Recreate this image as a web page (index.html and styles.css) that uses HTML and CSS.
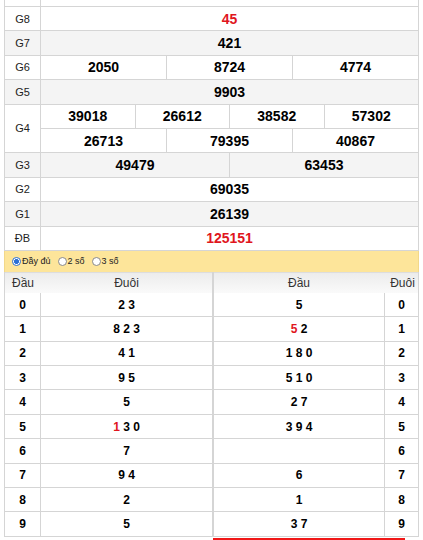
FILE: index.html
```html
<!DOCTYPE html>
<html lang="vi">
<head>
<meta charset="utf-8">
<link rel="stylesheet" href="styles.css">
</head>
<body>
<div class="wrap">
  <div class="kq">
    <div class="row top"><div class="lbl"></div><div class="vals"></div></div>
    <div class="row"><div class="lbl">G8</div><div class="vals"><span class="c red">45</span></div></div>
    <div class="row alt"><div class="lbl">G7</div><div class="vals"><span class="c">421</span></div></div>
    <div class="row"><div class="lbl">G6</div><div class="vals"><span class="c">2050</span><span class="c">8724</span><span class="c">4774</span></div></div>
    <div class="row alt"><div class="lbl">G5</div><div class="vals"><span class="c">9903</span></div></div>
    <div class="row dbl"><div class="lbl">G4</div>
      <div class="stack">
        <div class="vals sub"><span class="c">39018</span><span class="c">26612</span><span class="c">38582</span><span class="c">57302</span></div>
        <div class="vals"><span class="c">26713</span><span class="c">79395</span><span class="c">40867</span></div>
      </div>
    </div>
    <div class="row alt"><div class="lbl">G3</div><div class="vals"><span class="c">49479</span><span class="c">63453</span></div></div>
    <div class="row"><div class="lbl">G2</div><div class="vals"><span class="c">69035</span></div></div>
    <div class="row alt"><div class="lbl">G1</div><div class="vals"><span class="c">26139</span></div></div>
    <div class="row"><div class="lbl">ĐB</div><div class="vals"><span class="c red">125151</span></div></div>
  </div>

  <div class="opts">
    <label class="opt"><span class="radio on"></span>Đầy đủ</label>
    <label class="opt"><span class="radio"></span>2 số</label>
    <label class="opt"><span class="radio"></span>3 số</label>
  </div>

  <div class="loto">
    <div class="lt left">
      <div class="lh"><span class="k">Đầu</span><span class="v">Đuôi</span></div>
      <div class="lr"><span class="k">0</span><span class="v">2 3</span></div>
      <div class="lr"><span class="k">1</span><span class="v">8 2 3</span></div>
      <div class="lr"><span class="k">2</span><span class="v">4 1</span></div>
      <div class="lr"><span class="k">3</span><span class="v">9 5</span></div>
      <div class="lr"><span class="k">4</span><span class="v">5</span></div>
      <div class="lr"><span class="k">5</span><span class="v"><b class="red">1</b> 3 0</span></div>
      <div class="lr"><span class="k">6</span><span class="v">7</span></div>
      <div class="lr"><span class="k">7</span><span class="v">9 4</span></div>
      <div class="lr"><span class="k">8</span><span class="v">2</span></div>
      <div class="lr"><span class="k">9</span><span class="v">5</span></div>
    </div>
    <div class="lt right">
      <div class="lh"><span class="v">Đầu</span><span class="k">Đuôi</span></div>
      <div class="lr"><span class="v">5</span><span class="k">0</span></div>
      <div class="lr"><span class="v"><b class="red">5</b> 2</span><span class="k">1</span></div>
      <div class="lr"><span class="v">1 8 0</span><span class="k">2</span></div>
      <div class="lr"><span class="v">5 1 0</span><span class="k">3</span></div>
      <div class="lr"><span class="v">2 7</span><span class="k">4</span></div>
      <div class="lr"><span class="v">3 9 4</span><span class="k">5</span></div>
      <div class="lr"><span class="v"></span><span class="k">6</span></div>
      <div class="lr"><span class="v">6</span><span class="k">7</span></div>
      <div class="lr"><span class="v">1</span><span class="k">8</span></div>
      <div class="lr"><span class="v">3 7</span><span class="k">9</span></div>
    </div>
  </div>
  <div class="adrow"><div class="ad"></div></div>
</div>
</body>
</html>
```
FILE: styles.css
```css
html, body { margin: 0; padding: 0; background: #fff; }
body { font-family: "Liberation Sans", Arial, sans-serif; color: #000; }
.wrap { width: 415px; margin-left: 4px; }

.kq { border-left: 1px solid #d5d5d5; border-right: 1px solid #d5d5d5; }
.row { display: flex; height: 24.4px; box-sizing: border-box; border-bottom: 1px solid #d5d5d5; }
.row.top { height: 7px; }
.row.dbl { height: 48.8px; }
.row.alt { background: #f4f4f4; }
.lbl { width: 36px; flex: none; box-sizing: border-box; border-right: 1px solid #d5d5d5;
  display: flex; align-items: center; justify-content: center; font-size: 11px; color: #222; }
.vals { flex: 1; display: flex; }
.stack { flex: 1; display: flex; flex-direction: column; }
.stack .vals { height: 50%; }
.stack .vals.sub { border-bottom: 1px solid #d5d5d5; box-sizing: border-box; }
.c { flex: 1; display: flex; align-items: center; justify-content: center;
  font-size: 14px; font-weight: bold; }
.c + .c { border-left: 1px solid #d5d5d5; }
.red { color: #e0161d; }

.opts { height: 21px; box-sizing: border-box; background: #fde59a; border-left: 1px solid #f2d88a; border-right: 1px solid #f2d88a;
  display: flex; align-items: center; padding-left: 7px; font-size: 9px; color: #222; }
.opt { display: flex; align-items: center; gap: 1px; margin-right: 7px; }
.radio { width: 9px; height: 9px; box-sizing: border-box; border-radius: 50%; border: 1px solid #8a8a8a; background: #fff; }
.radio.on { border: 1px solid #2a6fd6; background: radial-gradient(circle, #2a6fd6 0 2.2px, #fff 2.6px); }

.loto { display: flex; }
.lt { box-sizing: border-box; border-left: 1px solid #d5d5d5; border-right: 1px solid #d5d5d5; }
.lt.left { width: 209px; }
.lt.right { width: 206px; }
.lh { height: 21px; box-sizing: border-box; border-top: 1px solid #ddd; display: flex;
  background: linear-gradient(#ececec, #fafafa); font-size: 12px; color: #333; }
.lh span { display: flex; align-items: center; justify-content: center; }
.lr { display: flex; height: 24.4px; box-sizing: border-box; border-bottom: 1px solid #d5d5d5; font-size: 12px; font-weight: bold; }
.lr span { display: flex; align-items: center; justify-content: center; white-space: pre; }
.lr b { font-weight: bold; }
.left .k { width: 36px; flex: none; box-sizing: border-box; }
.left .lr .k { border-right: 1px solid #d5d5d5; }
.left .v { flex: 1; }
.right .v { flex: 1; }
.right .k { width: 34px; flex: none; box-sizing: border-box; }
.right .lr .k { border-left: 1px solid #d5d5d5; }
.right .lh .k { padding-left: 3px; }

.adrow { display: flex; padding-left: 209px; padding-top: 1px; }
.ad { width: 192px; height: 3px; background: #f01818; }
```
